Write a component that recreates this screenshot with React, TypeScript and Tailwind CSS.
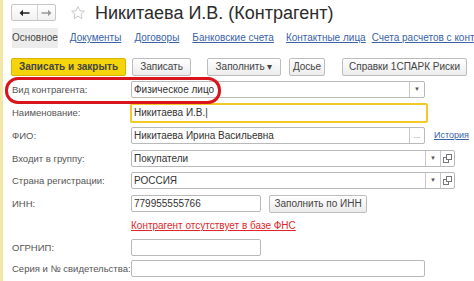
import React from "react";

const labelCls = "w-[119px] shrink-0 text-[9.5px] text-[#555] leading-none whitespace-nowrap";

function DropBtn() {
  return (
    <div className="w-[15px] h-full border-l border-[#c8c8c8] flex items-center justify-center text-[6px] text-[#555]">
      ▼
    </div>
  );
}

function OpenBtn() {
  return (
    <div className="w-[14px] h-full border-l border-[#c8c8c8] flex items-center justify-center">
      <svg width="9" height="9" viewBox="0 0 9 9" fill="none" stroke="#777" strokeWidth="1">
        <rect x="0.5" y="3.5" width="5" height="5" />
        <rect x="3.5" y="0.5" width="5" height="5" fill="#fff" />
      </svg>
    </div>
  );
}

function Field({
  value,
  width,
  children,
  focus,
}: {
  value?: string;
  width: string;
  children?: React.ReactNode;
  focus?: boolean;
}) {
  return (
    <div
      className={`${width} ${
        focus ? "h-[20px] border-2 border-[#f3c928] -ml-[1px]" : "h-[17px] border border-[#b9b9b9]"
      } rounded-[2px] bg-white flex items-stretch overflow-hidden`}
    >
      <div className="flex-1 flex items-center px-[2px] text-[10px] text-[#333] leading-none whitespace-nowrap">
        {value}
      </div>
      {children}
    </div>
  );
}

function Btn({ children, className = "" }: { children: React.ReactNode; className?: string }) {
  return (
    <div
      className={`h-[18px] px-[10px] flex items-center justify-center rounded-[2px] border border-[#bdbdbd] bg-gradient-to-b from-white to-[#ececec] text-[10px] text-[#444] leading-none whitespace-nowrap ${className}`}
    >
      {children}
    </div>
  );
}

export default function App() {
  return (
    <div
      className="relative w-[474px] h-[281px] overflow-hidden bg-white border-l-[3px] border-[#f4e7a6]"
      style={{ fontFamily: '"Liberation Sans", Arial, sans-serif' }}
    >
      {/* header */}
      <div className="flex items-center h-[17px] mt-[4px] pl-[8px]">
        <div className="w-[45px] h-[17px] flex rounded-[2px] border border-[#c6c6c6] bg-gradient-to-b from-white to-[#f1f1f1]">
          <div className="w-[26px] flex items-center justify-center border-r border-[#d2d2d2]">
            <svg width="11" height="8" viewBox="0 0 11 8">
              <path d="M0.5 4 L4 0.8 L4 3.2 L10.5 3.2 L10.5 4.8 L4 4.8 L4 7.2 Z" fill="#222" />
            </svg>
          </div>
          <div className="flex-1 flex items-center justify-center">
            <svg width="11" height="8" viewBox="0 0 11 8">
              <path d="M10.5 4 L7 0.8 L7 3.2 L0.5 3.2 L0.5 4.8 L7 4.8 L7 7.2 Z" fill="#999" />
            </svg>
          </div>
        </div>
        <svg className="ml-[14px]" width="16" height="16" viewBox="0 0 24 24" fill="none" stroke="#c4c4c4" strokeWidth="1.4">
          <path d="M12 2.5 L14.9 8.6 L21.5 9.3 L16.6 13.8 L18 20.4 L12 17 L6 20.4 L7.4 13.8 L2.5 9.3 L9.1 8.6 Z" />
        </svg>
        <div className="ml-[9px] text-[18px] text-[#2b2b2b] leading-none whitespace-nowrap">
          Никитаева И.В. (Контрагент)
        </div>
      </div>

      {/* tabs */}
      <div className="flex items-center h-[20px] mt-[7px] pl-[9px] text-[10px] leading-none whitespace-nowrap">
        <div className="h-full w-[52px] flex items-center justify-center bg-[#ececec] text-[#444]">Основное</div>
        <span className="ml-[12px] text-[#3a63a8] underline">Документы</span>
        <span className="ml-[13px] text-[#3a63a8] underline">Договоры</span>
        <span className="ml-[13px] text-[#3a63a8] underline">Банковские счета</span>
        <span className="ml-[12px] text-[#3a63a8] underline">Контактные лица</span>
        <span className="ml-[6px] text-[#3a63a8] underline">Счета расчетов с контрагентом</span>
      </div>

      {/* command bar */}
      <div className="flex items-center mt-[10px] pl-[8px]">
        <Btn className="w-[115px] !bg-none bg-[#f6d40a] border-[#d8b400] text-[#333] font-bold text-[9.5px]">Записать и закрыть</Btn>
        <Btn className="ml-[6px] w-[59px]">Записать</Btn>
        <Btn className="ml-[16px] w-[74px]">Заполнить ▾</Btn>
        <Btn className="ml-[8px] w-[36px] !px-0">Досье</Btn>
        <Btn className="ml-[17px] w-[125px]">Справки 1СПАРК Риски</Btn>
      </div>

      {/* form */}
      <div className="flex flex-col mt-[5px] pl-[9px]">
        <div className="flex items-center h-[17px]">
          <div className={labelCls}>Вид контрагента:</div>
          <Field value="Физическое лицо" width="w-[294px]">
            <DropBtn />
          </Field>
        </div>
        <div className="flex items-center h-[20px] mt-[5px]">
          <div className={labelCls}>Наименование:</div>
          <Field value="Никитаева И.В.|" width="w-[298px]" focus />
        </div>
        <div className="flex items-center h-[17px] mt-[4px]">
          <div className={labelCls}>ФИО:</div>
          <Field value="Никитаева Ирина Васильевна" width="w-[294px]">
            <div className="w-[15px] h-full border-l border-[#c8c8c8] flex items-end justify-center pb-[3px] text-[8px] text-[#777] leading-none">
              ...
            </div>
          </Field>
          <span className="ml-[9px] text-[9px] text-[#3a63a8] underline leading-none">История</span>
        </div>
        <div className="flex items-center h-[17px] mt-[6px]">
          <div className={labelCls}>Входит в группу:</div>
          <Field value="Покупатели" width="w-[324px]">
            <DropBtn />
            <OpenBtn />
          </Field>
        </div>
        <div className="flex items-center h-[17px] mt-[5px]">
          <div className={labelCls}>Страна регистрации:</div>
          <Field value="РОССИЯ" width="w-[324px]">
            <DropBtn />
            <OpenBtn />
          </Field>
        </div>
        <div className="flex items-center h-[17px] mt-[6px]">
          <div className={labelCls}>ИНН:</div>
          <Field value="779955555766" width="w-[130px]" />
          <Btn className="ml-[8px] w-[98px]">Заполнить по ИНН</Btn>
        </div>
        <div className="flex items-center h-[14px] mt-[7px]">
          <div className="w-[119px] shrink-0" />
          <span className="text-[10px] text-[#e0262a] underline leading-none whitespace-nowrap">
            Контрагент отсутствует в базе ФНС
          </span>
        </div>
        <div className="flex items-center h-[17px] mt-[6px]">
          <div className={labelCls}>ОГРНИП:</div>
          <Field width="w-[130px]" />
        </div>
        <div className="flex items-center h-[17px] mt-[4px]">
          <div className={labelCls}>Серия и № свидетельства:</div>
          <Field width="w-[294px]" />
        </div>
      </div>

      {/* red highlight around the first row */}
      <div className="absolute left-[2px] top-[77px] w-[216px] h-[27px] rounded-[13px] border-[3px] border-[#d8141c]" />
    </div>
  );
}
